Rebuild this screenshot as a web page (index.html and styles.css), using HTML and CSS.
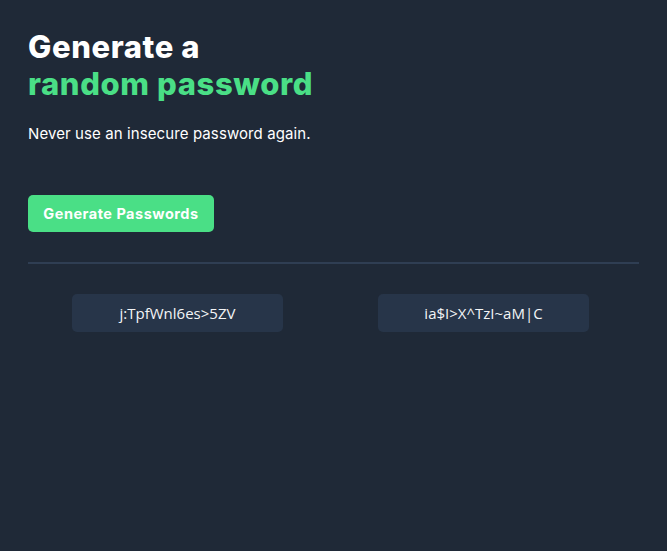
FILE: index.html
```html
<!DOCTYPE html>
<html>
<head>
<meta charset="utf-8">
<link rel="stylesheet" href="styles.css">
</head>
<body>
<main class="app">
  <h1 class="title">Generate a<br><span class="accent">random password</span></h1>
  <p class="subtitle">Never use an insecure password again.</p>
  <button class="generate">Generate Passwords</button>
  <hr class="divider">
  <div class="passwords">
    <div class="pw">j:TpfWnl6es&gt;5ZV</div>
    <div class="pw">ia$I&gt;X^TzI~aM|C</div>
  </div>
</main>
</body>
</html>
```
FILE: styles.css
```css
html, body {
  margin: 0;
  padding: 0;
  background: #1f2937;
  height: 100%;
}
.app {
  padding: 28px 28px 0 28px;
  font-family: "Inter", "Liberation Sans", sans-serif;
  color: #ffffff;
}
.title {
  margin: 0;
  font-size: 31px;
  line-height: 37px;
  font-weight: 800;
  letter-spacing: 0.6px;
}
.accent {
  color: #4adf86;
}
.subtitle {
  margin: 22px 0 0 0;
  font-size: 15px;
  line-height: 20px;
  letter-spacing: 0.1px;
  color: #ffffff;
}
.generate {
  margin-top: 51px;
  width: 186px;
  height: 37px;
  border: none;
  border-radius: 5px;
  background: #4adf86;
  color: #ffffff;
  font-family: "Inter", "Liberation Sans", sans-serif;
  font-weight: 700;
  font-size: 14.5px;
  letter-spacing: 0.5px;
  display: block;
}
.divider {
  margin: 30px 0 0 0;
  border: none;
  height: 2px;
  background: #2f3e53;
  width: 611px;
}
.passwords {
  display: flex;
  gap: 95px;
  padding-left: 44px;
  margin-top: 30px;
}
.pw {
  width: 211px;
  height: 38px;
  border-radius: 5px;
  background: #273549;
  color: #f3f4f6;
  font-family: "Open Sans", "Liberation Sans", sans-serif;
  font-size: 15px;
  display: flex;
  align-items: center;
  justify-content: center;
}
```
